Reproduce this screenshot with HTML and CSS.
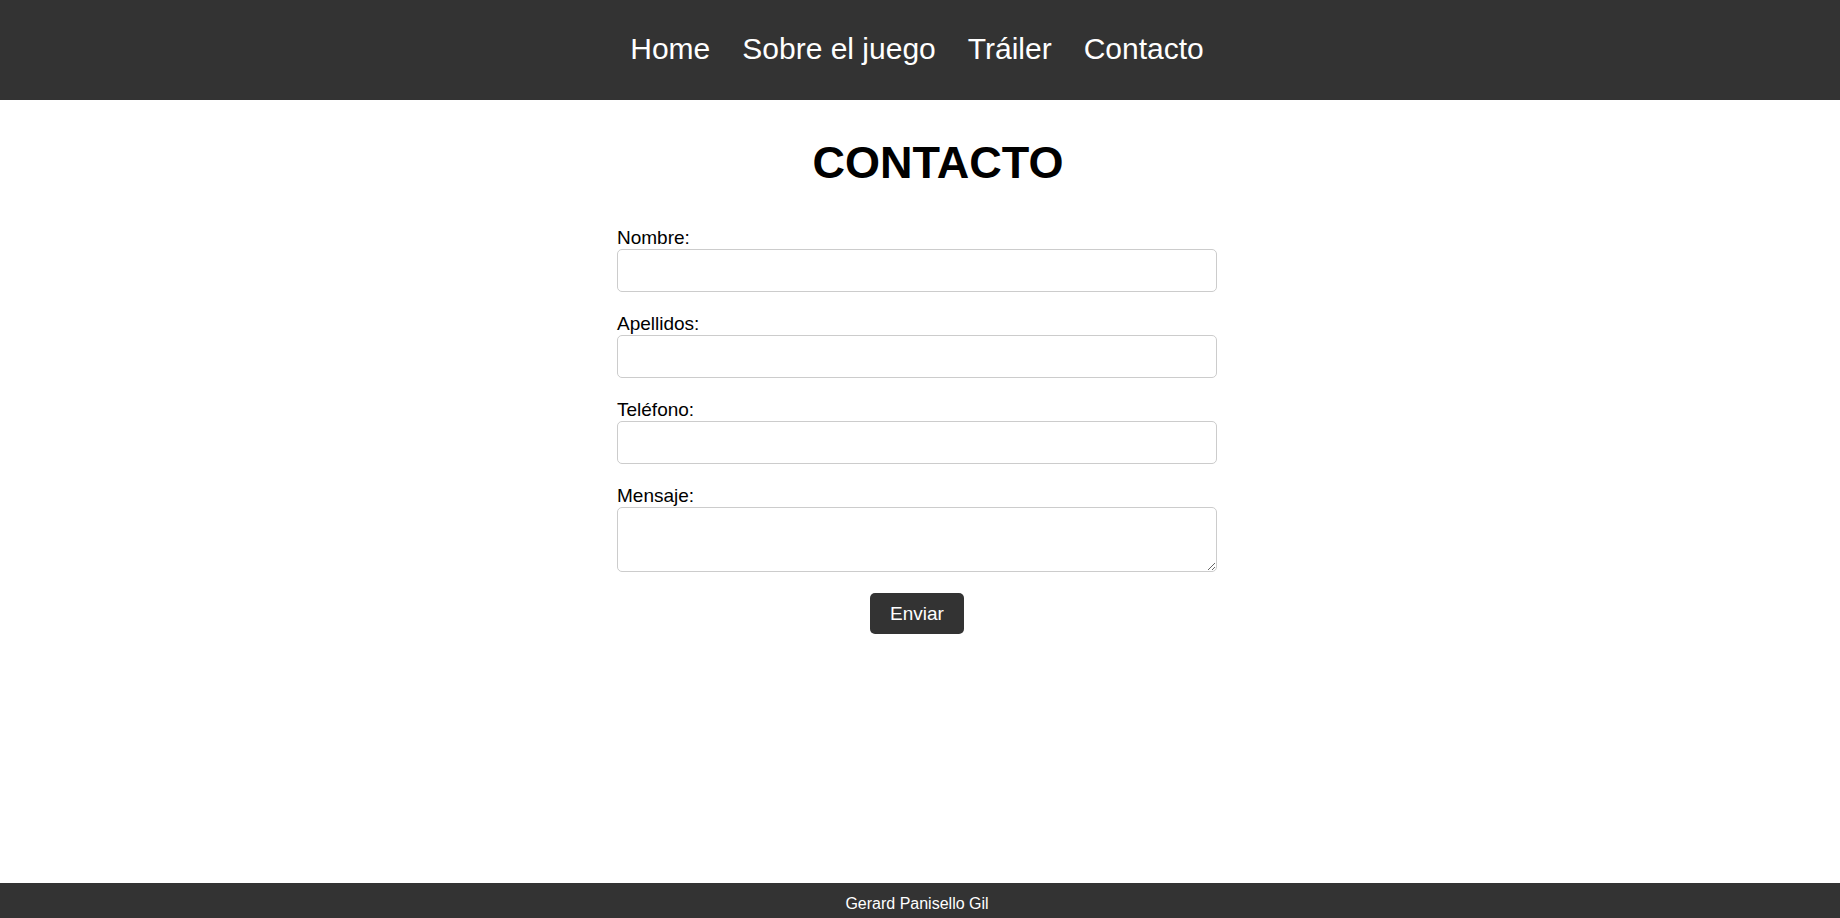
FILE: index.html
```html
<!DOCTYPE html>
<html lang="es">
<head>
<meta charset="utf-8">
<title>Contacto</title>
<link rel="stylesheet" href="styles.css">
</head>
<body>
<header class="site-header">
  <nav>
    <ul class="nav-list">
      <li><a href="#">Home</a></li>
      <li><a href="#">Sobre el juego</a></li>
      <li><a href="#">Tráiler</a></li>
      <li><a href="#">Contacto</a></li>
    </ul>
  </nav>
</header>
<main class="main">
  <h1 class="title">CONTACTO</h1>
  <form class="contact-form">
    <label class="field-label" for="nombre">Nombre:</label>
    <input class="field-input" type="text" id="nombre">
    <label class="field-label" for="apellidos">Apellidos:</label>
    <input class="field-input" type="text" id="apellidos">
    <label class="field-label" for="telefono">Teléfono:</label>
    <input class="field-input" type="tel" id="telefono">
    <label class="field-label" for="mensaje">Mensaje:</label>
    <textarea class="field-textarea" id="mensaje"></textarea>
    <div class="actions">
      <button class="submit-btn" type="submit">Enviar</button>
    </div>
  </form>
</main>
<footer class="site-footer">Gerard Panisello Gil</footer>
</body>
</html>
```

FILE: styles.css
```css
* {
  box-sizing: border-box;
}

html, body {
  margin: 0;
  padding: 0;
}

body {
  font-family: "Liberation Sans", Arial, sans-serif;
  color: #000;
  background: #fff;
  min-height: 100vh;
  display: flex;
  flex-direction: column;
  overflow: hidden;
}

.site-header {
  background: #333;
  height: 100px;
  display: flex;
  align-items: center;
  justify-content: center;
  padding: 0 6px 3px 0;
}

.nav-list {
  list-style: none;
  margin: 0;
  padding: 0;
  display: flex;
  gap: 32px;
}

.nav-list a {
  color: #fff;
  text-decoration: none;
  font-size: 30px;
  line-height: 34px;
}

.main {
  flex: 1;
  padding: 38px 6px 0 0;
}

.title {
  margin: 0;
  padding-left: 42px;
  text-align: center;
  font-size: 45px;
  line-height: 50px;
  font-weight: bold;
}

.contact-form {
  width: 600px;
  margin: 38px auto 0;
  display: flex;
  flex-direction: column;
}

.field-label {
  font-size: 19px;
  line-height: 23px;
}

.field-input,
.field-textarea {
  display: block;
  width: 600px;
  border: 1px solid #ccc;
  border-radius: 5px;
  font-family: inherit;
  font-size: 19px;
  padding: 10px;
  margin: 0 0 20px;
  background: #fff;
}

.field-input {
  height: 43px;
}

.field-textarea {
  height: 65px;
  margin-bottom: 21px;
}

.actions {
  display: flex;
  justify-content: center;
}

.submit-btn {
  background: #333;
  color: #fff;
  border: none;
  border-radius: 5px;
  font-family: inherit;
  font-size: 19px;
  line-height: 22px;
  height: 41px;
  padding: 0 20px;
  cursor: pointer;
}

.site-footer {
  background: #333;
  color: #fff;
  height: 35px;
  padding: 12px 6px 0 0;
  text-align: center;
  font-size: 16px;
  line-height: 18px;
}
```
